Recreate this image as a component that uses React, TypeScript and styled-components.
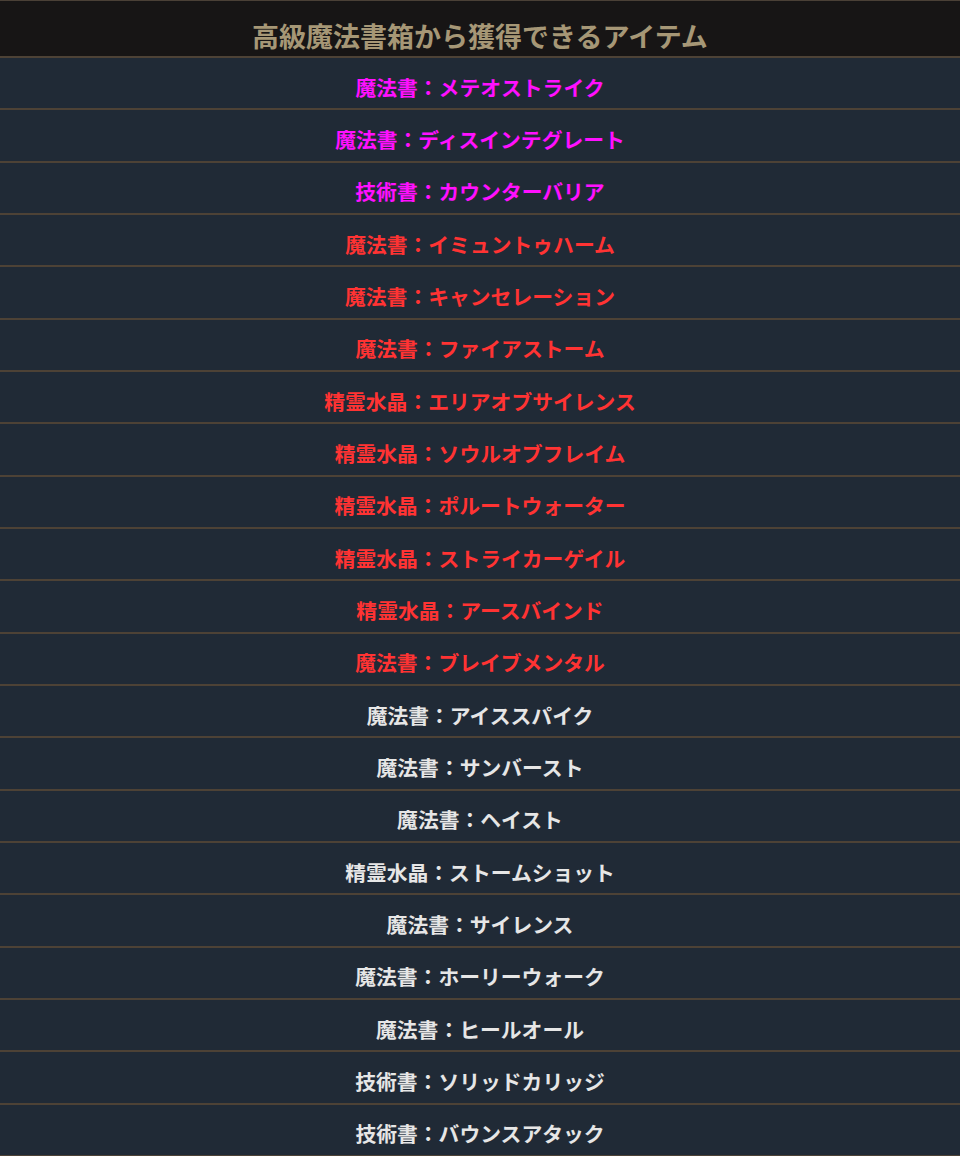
import styled, { createGlobalStyle } from 'styled-components';

const GlobalStyle = createGlobalStyle`
  html, body {
    margin: 0;
    padding: 0;
    background-color: #202a36;
  }
`;

const Table = styled.div`
  width: 960px;
  display: flex;
  flex-direction: column;
  border-top: 1px solid #4a4036;
  font-family: "Noto Sans CJK JP", "Noto Sans", sans-serif;
  font-weight: 700;
`;

const Header = styled.div`
  box-sizing: border-box;
  height: 57px;
  padding-top: 14px;
  display: flex;
  align-items: center;
  justify-content: center;
  background-color: #171515;
  border-bottom: 2px solid #4d4236;
  color: #a69776;
  font-size: 27px;
  line-height: 1;
`;

type Tone = 'magenta' | 'red' | 'white';

const toneColor: Record<Tone, string> = {
  magenta: '#ff10ff',
  red: '#ff3333',
  white: '#e6e6e6',
};

const Row = styled.div<{ $tone: Tone }>`
  box-sizing: border-box;
  height: 52.33px;
  padding-top: 8px;
  display: flex;
  align-items: center;
  justify-content: center;
  background-color: #202a36;
  border-bottom: 2px solid #4d4236;
  color: ${(p) => toneColor[p.$tone]};
  font-size: 20.8px;
  line-height: 1;
`;

const items: [string, string, Tone][] = [
  ['魔法書', 'メテオストライク', 'magenta'],
  ['魔法書', 'ディスインテグレート', 'magenta'],
  ['技術書', 'カウンターバリア', 'magenta'],
  ['魔法書', 'イミュントゥハーム', 'red'],
  ['魔法書', 'キャンセレーション', 'red'],
  ['魔法書', 'ファイアストーム', 'red'],
  ['精霊水晶', 'エリアオブサイレンス', 'red'],
  ['精霊水晶', 'ソウルオブフレイム', 'red'],
  ['精霊水晶', 'ポルートウォーター', 'red'],
  ['精霊水晶', 'ストライカーゲイル', 'red'],
  ['精霊水晶', 'アースバインド', 'red'],
  ['魔法書', 'ブレイブメンタル', 'red'],
  ['魔法書', 'アイススパイク', 'white'],
  ['魔法書', 'サンバースト', 'white'],
  ['魔法書', 'ヘイスト', 'white'],
  ['精霊水晶', 'ストームショット', 'white'],
  ['魔法書', 'サイレンス', 'white'],
  ['魔法書', 'ホーリーウォーク', 'white'],
  ['魔法書', 'ヒールオール', 'white'],
  ['技術書', 'ソリッドカリッジ', 'white'],
  ['技術書', 'バウンスアタック', 'white'],
];

export default function App() {
  return (
    <>
      <GlobalStyle />
      <Table>
        <Header>高級魔法書箱から獲得できるアイテム</Header>
        {items.map(([kind, name, tone]) => (
          <Row key={name} $tone={tone}>
            {kind}：{name}
          </Row>
        ))}
      </Table>
    </>
  );
}
